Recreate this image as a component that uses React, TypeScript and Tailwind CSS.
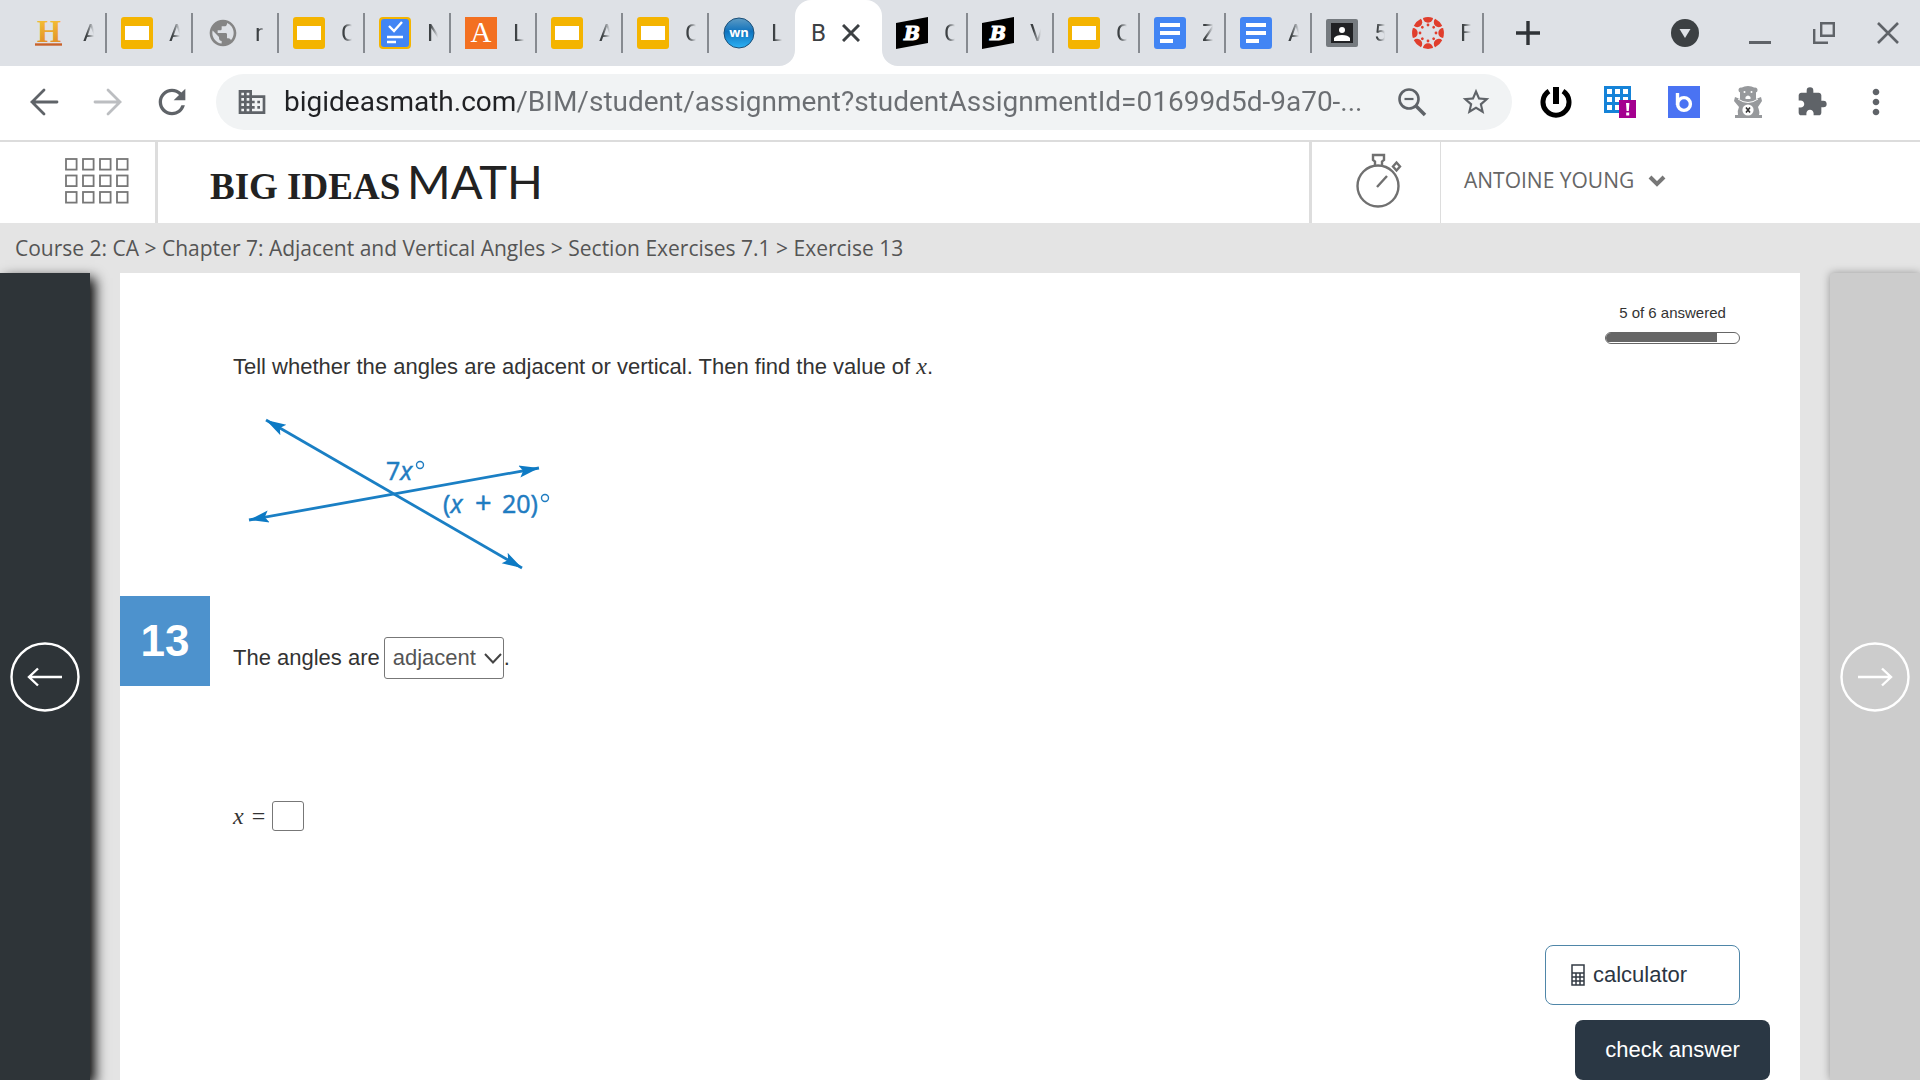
import type { ReactNode } from "react";
import { MdBusiness, MdExtension, MdMoreVert, MdPublic, MdRefresh, MdStarBorder } from "react-icons/md";

function SlidesIcon() {
  return (
    <svg viewBox="0 0 32 32" className="size-8">
      <rect width="32" height="32" rx="3" fill="#f4b400" />
      <rect x="4" y="9" width="24" height="14" fill="#fff" />
    </svg>
  );
}

function DocsIcon() {
  return (
    <svg viewBox="0 0 32 32" className="size-8">
      <rect width="32" height="32" rx="3" fill="#4285f4" />
      <path d="M6 8h20M6 16h20M6 24h13" stroke="#fff" strokeWidth="4" />
    </svg>
  );
}

function HistoryIcon() {
  return (
    <svg viewBox="0 0 32 32" className="size-8">
      <defs>
        <linearGradient id="gold" x2="0" y2="1">
          <stop offset="0" stopColor="#f9c93a" />
          <stop offset="1" stopColor="#dd8424" />
        </linearGradient>
      </defs>
      <text x="2" y="25" fontFamily="Liberation Serif" fontWeight="700" fontSize="31" fill="url(#gold)">
        H
      </text>
      <path d="M0 27.5h27" stroke="#c9622a" strokeWidth="2.4" />
    </svg>
  );
}

function ChecklistIcon() {
  return (
    <svg viewBox="0 0 32 32" className="size-8">
      <rect width="32" height="32" rx="4" fill="#f4b400" />
      <rect x="2" y="2" width="28" height="28" rx="3" fill="#4285f4" />
      <path d="M10 9l5 5 8-9M8 20h16M8 25h9" fill="none" stroke="#fff" strokeWidth="2.4" />
    </svg>
  );
}

function AmplifyIcon() {
  return (
    <svg viewBox="0 0 32 32" className="size-8">
      <rect width="32" height="32" fill="#f37021" />
      <text x="16" y="25" textAnchor="middle" fontFamily="Liberation Serif" fontSize="29" fill="#fff">
        A
      </text>
    </svg>
  );
}

function WnIcon() {
  return (
    <svg viewBox="0 0 32 32" className="size-8">
      <defs>
        <linearGradient id="ball" x2="0" y2="1">
          <stop offset="0" stopColor="#5f9cc4" />
          <stop offset="0.45" stopColor="#0f72bd" />
          <stop offset="1" stopColor="#2cb2f5" />
        </linearGradient>
      </defs>
      <circle cx="16" cy="16" r="15" fill="url(#ball)" stroke="#1b4f78" />
      <text x="16" y="20" textAnchor="middle" fontFamily="Open Sans" fontWeight="700" fontSize="13" fill="#fff">
        wn
      </text>
    </svg>
  );
}

function BrainlyIcon() {
  return (
    <svg viewBox="0 0 32 32" className="size-8">
      <path d="M0 6L32 0v26L0 32z" fill="#000" />
      <text x="16" y="23" textAnchor="middle" fontFamily="DejaVu Serif" fontStyle="italic" fontWeight="700" fontSize="19" fill="#fff" stroke="#fff">
        B
      </text>
    </svg>
  );
}

function ClassroomIcon() {
  return (
    <svg viewBox="0 0 32 32" className="size-8">
      <rect y="2" width="32" height="28" rx="2" fill="#757a7f" />
      <rect x="5" y="6" width="22" height="20" fill="#202124" />
      <circle cx="16" cy="13" r="3" fill="#fff" />
      <path d="M8 24v-3q2-3 8-3t8 3v3z" fill="#fff" />
    </svg>
  );
}

function CanvasIcon() {
  const angles = [0, 45, 90, 135, 180, 225, 270, 315];
  return (
    <svg viewBox="0 0 32 32" className="size-8">
      {angles.map((a) => (
        <g key={a} transform={`rotate(${a} 16 16)`} fill="#e03e2d">
          <path d="M11 .9a16 16 0 0 1 10 0a5 4.800 0 0 1-10 0z" />
          <circle cx="16" cy="8" r="1.4" />
        </g>
      ))}
    </svg>
  );
}

const tabs: { title: string; icon: ReactNode }[] = [
  { title: "A", icon: <HistoryIcon /> },
  { title: "A", icon: <SlidesIcon /> },
  { title: "r", icon: <MdPublic className="size-8 text-[#858585]" /> },
  { title: "C", icon: <SlidesIcon /> },
  { title: "N", icon: <ChecklistIcon /> },
  { title: "L", icon: <AmplifyIcon /> },
  { title: "A", icon: <SlidesIcon /> },
  { title: "C", icon: <SlidesIcon /> },
  { title: "L", icon: <WnIcon /> },
  { title: "B", icon: null },
  { title: "C", icon: <BrainlyIcon /> },
  { title: "V", icon: <BrainlyIcon /> },
  { title: "C", icon: <SlidesIcon /> },
  { title: "Z", icon: <DocsIcon /> },
  { title: "A", icon: <DocsIcon /> },
  { title: "5", icon: <ClassroomIcon /> },
  { title: "F", icon: <CanvasIcon /> },
];

const ACTIVE = 9;

function TabStrip() {
  return (
    <div className="flex h-[66px] bg-[#dee1e6] px-[21px] font-[Roboto,sans-serif] text-2xl text-[#3c4043]">
      <div className="flex" role="tablist">
        {tabs.map((tab, i) =>
          i === ACTIVE ? (
            <div key={i} className="relative flex w-[87px] items-center justify-between rounded-t-2xl bg-white pr-[22px] pl-4">
              <svg viewBox="0 0 16 16" className="absolute bottom-0 -left-4 size-4">
                <path d="M16 0v16H0A16 16 0 0 0 16 0z" fill="#fff" />
              </svg>
              <button role="tab" aria-selected="true">
                {tab.title}
              </button>
              <button aria-label="Close tab">
                <svg viewBox="0 0 18 18" className="size-[18px]">
                  <path d="M1 1l16 16M17 1L1 17" stroke="#3c4043" strokeWidth="3" />
                </svg>
              </button>
              <svg viewBox="0 0 16 16" className="absolute -right-4 bottom-0 size-4">
                <path d="M0 0v16h16A16 16 0 0 1 0 0z" fill="#fff" />
              </svg>
            </div>
          ) : (
            <button key={i} role="tab" aria-selected="false" className="flex w-[86px] items-center pl-[14px]">
              <span className="w-8 shrink-0">{tab.icon}</span>
              <span className="ml-4 w-[11px] shrink-0 overflow-hidden text-left [mask-image:linear-gradient(90deg,#000_30%,transparent)]">
                {tab.title}
              </span>
              {i !== ACTIVE - 1 && <span className="ml-auto h-10 w-[2px] shrink-0 bg-[#868a90]" />}
            </button>
          ),
        )}
      </div>
      <button aria-label="New tab" className="ml-8">
        <svg viewBox="0 0 24 24" className="size-6">
          <path d="M12 0v24M0 12h24" stroke="#2f3337" strokeWidth="3.4" />
        </svg>
      </button>
      <div className="ml-auto flex items-center gap-[42px]">
        <button aria-label="Search tabs" className="mr-2">
          <svg viewBox="0 0 28 28" className="size-7">
            <circle cx="14" cy="14" r="14" fill="#3c4043" />
            <path d="M8.500 10h11l-5.500 9z" fill="#dee1e6" />
          </svg>
        </button>
        <button aria-label="Minimize">
          <svg viewBox="0 0 22 22" className="size-[22px]">
            <path d="M0 20.5h22" stroke="#5f6368" strokeWidth="3" />
          </svg>
        </button>
        <button aria-label="Restore">
          <svg viewBox="0 0 22 22" className="size-[22px]" fill="none" stroke="#5f6368" strokeWidth="2.4">
            <path d="M8.2 1.2h12.6v12.6H8.2zM1.2 7v13.8H15" />
          </svg>
        </button>
        <button aria-label="Close window">
          <svg viewBox="0 0 22 22" className="size-[22px]">
            <path d="M1 1l20 20M21 1L1 21" stroke="#5f6368" strokeWidth="2.6" />
          </svg>
        </button>
      </div>
    </div>
  );
}

function Toolbar() {
  return (
    <div className="flex h-[76px] items-start border-b-2 border-[#dcdcdc] bg-white px-7 pt-2 text-[#5f6368]">
      <div className="flex h-14 items-center gap-8">
        <button aria-label="Back">
          <svg viewBox="0 0 32 32" className="size-8" fill="none" stroke="#5f6368" strokeWidth="2.8" strokeLinecap="round">
            <path d="M16 4L4 16l12 12M4 16h25" />
          </svg>
        </button>
        <button aria-label="Forward">
          <svg viewBox="0 0 32 32" className="size-8" fill="none" stroke="#bcbec1" strokeWidth="2.8" strokeLinecap="round">
            <path d="M16 4l12 12-12 12M28 16H3" />
          </svg>
        </button>
        <button aria-label="Reload">
          <MdRefresh className="-m-1 size-10" />
        </button>
      </div>
      <div className="ml-7 flex h-14 flex-1 items-center rounded-full bg-[#f1f3f4] px-5">
        <MdBusiness className="size-8 shrink-0" />
        <input
          aria-label="Address"
          defaultValue="bigideasmath.com/BIM/student/assignment?studentAssignmentId=01699d5d-9a70-..."
          className="ml-4 min-w-0 flex-1 bg-[linear-gradient(90deg,#202124_231px,#6b6e72_231px)] bg-clip-text font-[Roboto,sans-serif] text-[28px] leading-9 text-transparent outline-none"
        />
        <button aria-label="Zoom" className="ml-3">
          <svg viewBox="0 0 32 32" className="size-8" fill="none" stroke="#5f6368">
            <circle cx="13" cy="13" r="9.5" strokeWidth="2.6" />
            <path d="M20 20l9 9" strokeWidth="3.6" />
            <path d="M8.5 13h9" strokeWidth="2.2" />
          </svg>
        </button>
        <button aria-label="Bookmark" className="ml-8">
          <MdStarBorder className="size-8" />
        </button>
      </div>
      <div className="ml-7 flex h-14 items-center gap-8">
        <button aria-label="Power">
          <svg viewBox="0 0 32 32" className="size-8" fill="none" stroke="#000">
            <path d="M9 5.2a13 13 0 1 0 14 0" strokeWidth="5" />
            <path d="M16 1v17" strokeWidth="6" />
          </svg>
        </button>
        <button aria-label="App grid">
          <svg viewBox="0 0 32 32" className="size-8">
            <rect width="27" height="27" fill="#1583d8" />
            <path d="M3 3h5v5H3zM11 3h5v5h-5zM19 3h5v5h-5zM3 11h5v5H3zM11 11h5v5h-5zM19 11h5v5h-5zM3 19h5v5H3zM11 19h5v5h-5z" fill="#fff" />
            <rect x="15" y="14" width="17" height="18" fill="#a4008f" />
            <path d="M22 17h3.4l-.6 8h-2.2zM22.2 26.6h3v3h-3z" fill="#fff" />
          </svg>
        </button>
        <button aria-label="Bitmoji">
          <svg viewBox="0 0 32 32" className="size-8">
            <rect width="32" height="32" fill="#4a73f3" />
            <path d="M9.500 7v12" stroke="#fff" strokeWidth="3.400" />
            <circle cx="16" cy="18" r="6.400" fill="none" stroke="#fff" strokeWidth="3.400" />
          </svg>
        </button>
        <button aria-label="Bear">
          <svg viewBox="0 0 32 32" className="size-8">
            <g fill="#97999c">
              <circle cx="9" cy="4" r="2.500" />
              <circle cx="23" cy="4" r="2.500" />
              <path d="M8 6q0-6 8-6t8 6v7l5-2 1 4-4 6q2 5 1 8h3v3H3v-3h3q-1-4 1-8l-5-6 1-4 5 2z" />
            </g>
            <circle cx="12.500" cy="6" r="1" fill="#fff" />
            <circle cx="19.500" cy="6" r="1" fill="#fff" />
            <path d="M13.500 11q2.500-3 5 0v2h-5z" fill="#fff" />
            <path d="M6 13q10 7 20 0" fill="none" stroke="#fff" />
            <circle cx="16" cy="24" r="5.600" fill="#fff" />
            <path d="M14 21.500l4 5M18 21.500l-4 5" stroke="#333" strokeWidth="1.600" />
          </svg>
        </button>
        <button aria-label="Extensions">
          <MdExtension className="size-8" />
        </button>
        <button aria-label="Menu">
          <MdMoreVert className="-m-1 size-10" />
        </button>
      </div>
    </div>
  );
}

function SiteHeader() {
  const cols = [0, 1, 2, 3];
  const rows = [0, 1, 2];
  return (
    <header className="flex h-[81px] items-stretch bg-white text-[#666]">
      <button aria-label="Apps" className="flex w-[158px] items-center border-r-[3px] border-[#ddd] pb-[3px] pl-[65px]">
        <svg viewBox="0 0 64 46" className="h-[46px] w-16" fill="none" stroke="#777" strokeWidth="1.8">
          {cols.map((c) =>
            rows.map((r) => <rect key={`${c}-${r}`} x={1 + c * 17} y={1 + r * 16.5} width="10.6" height="10.6" />),
          )}
        </svg>
      </button>
      <a href="/" className="flex flex-1 items-center pb-[3px] pl-[52px] text-[#222]">
        <svg viewBox="0 0 330 44" className="h-11 w-[330px]" fill="currentColor">
          <text x="0" y="40" fontFamily="Liberation Serif" fontWeight="700" fontSize="37">
            BIG IDEAS
          </text>
          <text x="197" y="40" fontFamily="Lato" fontSize="47">
            MATH
          </text>
        </svg>
      </a>
      <button aria-label="Timer" className="flex w-[131px] items-center justify-center border-l-[3px] border-[#ddd] pb-[3px] pl-2">
        <svg viewBox="0 0 48 56" className="h-14 w-12" fill="none" stroke="#707070" strokeWidth="2.4">
          <circle cx="22" cy="33" r="20.5" />
          <path d="M19 12.5v-4l-2-1.5V2h11v5l-2 1.500v4M21 34l10-11" />
          <path d="M40.500 9.500l3.500 4-3.500 4-3.500-4z" />
        </svg>
      </button>
      <button className="flex w-[480px] items-center gap-[14px] border-l border-[#ddd] pb-[3px] pl-[23px] font-['Open_Sans',sans-serif] text-[21px]">
        ANTOINE YOUNG
        <svg viewBox="0 0 18 12" className="h-3 w-[18px]" fill="none" stroke="#777" strokeWidth="4">
          <path d="M2 2l7 7 7-7" />
        </svg>
      </button>
    </header>
  );
}

function Diagram() {
  return (
    <svg
      viewBox="0 0 310 160"
      className="h-40 w-[310px]"
      fill="#1f7cc1"
      fontFamily="Open Sans"
      fontSize="25"
      role="img"
      aria-label="Two intersecting lines"
    >
      <defs>
        <marker id="head" markerUnits="userSpaceOnUse" markerWidth="22" markerHeight="14" refX="20" refY="6" orient="auto-start-reverse">
          <path d="M0 0L20 6L0 12L4 6z" fill="#0d7ac4" />
        </marker>
      </defs>
      <g stroke="#1a7fc4" strokeWidth="2.8">
        <line x1="26" y1="5" x2="282" y2="153" markerStart="url(#head)" markerEnd="url(#head)" />
        <line x1="9" y1="105" x2="299" y2="53" markerStart="url(#head)" markerEnd="url(#head)" />
      </g>
      <g stroke="#1f7cc1" strokeWidth="0.5">
        <text x="146" y="65">
          7<tspan fontStyle="italic">x</tspan>
        </text>
        <text x="203" y="98">
          (<tspan fontStyle="italic">x</tspan>
        </text>
        <text x="235" y="98" fontSize="29">
          +
        </text>
        <text x="262" y="98">20)</text>
      </g>
      <circle cx="180" cy="50" r="3.500" fill="none" stroke="#1f7cc1" strokeWidth="1.400" />
      <circle cx="305" cy="83" r="3.500" fill="none" stroke="#1f7cc1" strokeWidth="1.400" />
    </svg>
  );
}

function CircleArrow({ flip }: { flip?: boolean }) {
  return (
    <svg viewBox="0 0 70 70" className="size-[70px]" fill="none" stroke="#fff" strokeWidth="2.4">
      <circle cx="35" cy="35" r="33.500" />
      {flip ? <path d="M18 35h33M42 26.500l9 8.500-9 8.500" /> : <path d="M52 35H19M28 26.500L19 35l9 8.500" />}
    </svg>
  );
}

function MathX() {
  return <i className="font-['Liberation_Serif',serif] text-2xl leading-6">x</i>;
}

function Exercise() {
  return (
    <main className="flex flex-1 bg-white font-['Liberation_Sans',sans-serif] text-[22px] leading-6 text-[#333]">
      <div className="w-[90px] pt-[323px]">
        <div className="flex size-[90px] items-center justify-center bg-[#4d92cd] text-[44px] font-bold text-white">13</div>
      </div>
      <section className="flex flex-1 flex-col items-start pt-[81px] pl-[23px]">
        <p>
          Tell whether the angles are adjacent or vertical. Then find the value of <MathX />.
        </p>
        <div className="pt-9 pl-[7px]">
          <Diagram />
        </div>
        <div className="flex items-center pt-[62px]">
          <label htmlFor="kind">The angles are</label>
          <div className="relative ml-1">
            <select
              id="kind"
              defaultValue="adjacent"
              className="h-[42px] w-[120px] appearance-none rounded-[3px] border border-[#777] bg-white pl-2 text-[#555]"
            >
              <option>adjacent</option>
              <option>vertical</option>
            </select>
            <svg viewBox="0 0 18 12" className="pointer-events-none absolute top-4 right-[2px] h-3 w-[18px]" fill="none" stroke="#444" strokeWidth="2">
              <path d="M1 1l8 8.500L17 1" />
            </svg>
          </div>
          .
        </div>
        <div className="flex items-center gap-[7px] pt-[122px]">
          <label htmlFor="answer" className="flex gap-2 font-['Liberation_Serif',serif] text-2xl leading-6">
            <MathX /> =
          </label>
          <input id="answer" className="h-[30px] w-8 rounded-[3px] border border-[#777] bg-white px-1" />
        </div>
      </section>
      <aside className="flex flex-col items-end justify-between pr-[30px]">
        <div className="mr-[30px] w-[135px] pt-7 text-center text-[15px]">
          5 of 6 answered
          <div role="progressbar" aria-valuenow={5} aria-valuemax={6} className="mt-[7px] h-3 overflow-hidden rounded-full border border-[#666]">
            <div className="h-[9px] w-5/6 bg-[#666]" />
          </div>
        </div>
        <div className="flex flex-col items-end gap-[15px]">
          <button className="mr-[30px] flex h-[60px] w-[195px] items-center gap-2 rounded-lg border border-[#4f86a8] pl-[25px] text-[#2b3643]">
            <svg viewBox="0 0 14 22" className="h-[22px] w-[14px]" fill="none" stroke="#333b44" strokeWidth="1.500">
              <path d="M1 1h12v20H1zM1 9h12M1 13h12M1 17h12M5 9v12M9 9v12" />
            </svg>
            calculator
          </button>
          <button className="h-[60px] w-[195px] rounded-lg bg-[#2a3744] text-white">check answer</button>
        </div>
      </aside>
    </main>
  );
}

export default function App() {
  return (
    <div className="flex min-h-screen flex-col bg-[#e4e4e4]">
      <TabStrip />
      <Toolbar />
      <SiteHeader />
      <nav className="flex h-[50px] items-center pt-[2px] pl-[15px] font-['Open_Sans',sans-serif] text-[21px] text-[#555]">
        Course 2: CA &gt; Chapter 7: Adjacent and Vertical Angles &gt; Section Exercises 7.1 &gt; Exercise 13
      </nav>
      <div className="flex flex-1 gap-[30px] overflow-x-clip">
        <button aria-label="Previous exercise" className="flex w-[90px] items-center justify-center bg-[#2e3438] shadow-[5px_5px_12px_#000]">
          <CircleArrow />
        </button>
        <Exercise />
        <button aria-label="Next exercise" className="flex w-[90px] items-center justify-center rounded-tl-sm bg-[#ccc] shadow-[0_0_8px_rgba(0,0,0,0.350)]">
          <CircleArrow flip />
        </button>
      </div>
    </div>
  );
}
